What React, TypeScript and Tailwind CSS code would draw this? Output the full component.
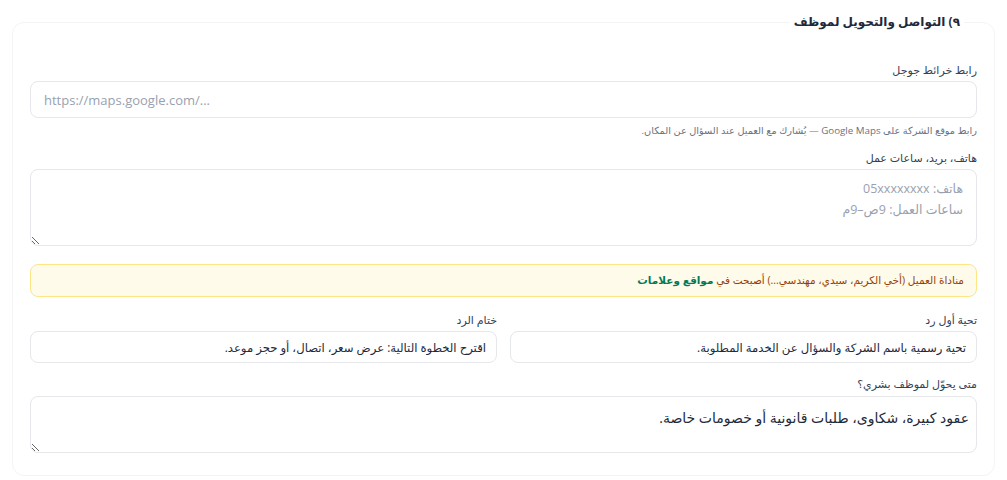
import React from 'react';

const font = { fontFamily: '"Open Sans", "DejaVu Sans", sans-serif' };

const Label: React.FC<{ children: React.ReactNode; className?: string }> = ({ children, className = '' }) => (
  <label className={`block text-[11px] leading-5 text-gray-700 ${className}`}>{children}</label>
);

const App: React.FC = () => {
  return (
    <div dir="rtl" className="min-h-screen bg-white px-[12px] pt-[12px]" style={font}>
      <fieldset className="border border-gray-100 rounded-xl px-[17px] pb-[22px]">
        <legend className="mr-[13px] px-1 text-[12px] leading-5 font-bold text-gray-800">
          ٩) التواصل والتحويل لموظف
        </legend>

        {/* Google maps */}
        <Label className="mt-[28px] mb-px">رابط خرائط جوجل</Label>
        <input
          type="text"
          dir="ltr"
          placeholder="https://maps.google.com/..."
          className="block w-full h-[37px] rounded-lg border border-gray-200 px-[13px] text-[13px] text-gray-800 placeholder:text-gray-400 focus:outline-none"
        />
        <p className="mt-[5px] text-[9.75px] leading-4 text-gray-500">
          رابط موقع الشركة على Google Maps — يُشارك مع العميل عند السؤال عن المكان.
        </p>

        {/* Contact info */}
        <Label className="mt-[9px] mb-px">هاتف، بريد، ساعات عمل</Label>
        <textarea
          placeholder={'هاتف: 05xxxxxxxx\nساعات العمل: 9ص–9م'}
          className="block w-full h-[77px] rounded-lg border border-gray-200 px-[13px] py-[8px] text-[12.5px] leading-[21px] text-gray-800 placeholder:text-gray-400 focus:outline-none"
        />

        {/* Notice */}
        <div className="mt-[18px] h-[33px] flex items-center rounded-lg border border-amber-200 bg-amber-50 px-[12px] text-[10.5px] text-amber-800">
          <span>
            مناداة العميل (أخي الكريم، سيدي، مهندسي...) أصبحت في{' '}
            <span className="font-bold text-emerald-700">مواقع وعلامات</span>
          </span>
        </div>

        {/* Greeting / closing */}
        <div className="mt-[13px] grid grid-cols-2 gap-[13px]">
          <div>
            <Label className="mb-px">تحية أول رد</Label>
            <input
              type="text"
              defaultValue="تحية رسمية باسم الشركة والسؤال عن الخدمة المطلوبة."
              className="block w-full h-[32px] rounded-lg border border-gray-200 px-[10px] text-[11.7px] text-gray-800 focus:outline-none"
            />
          </div>
          <div>
            <Label className="mb-px">ختام الرد</Label>
            <input
              type="text"
              defaultValue="اقترح الخطوة التالية: عرض سعر، اتصال، أو حجز موعد."
              className="block w-full h-[32px] rounded-lg border border-gray-200 px-[10px] text-[11.7px] text-gray-800 focus:outline-none"
            />
          </div>
        </div>

        {/* Handoff */}
        <Label className="mt-[11px] mb-0.5">متى يحوّل لموظف بشري؟</Label>
        <textarea
          defaultValue="عقود كبيرة، شكاوى، طلبات قانونية أو خصومات خاصة."
          className="block w-full h-[57px] rounded-lg border border-gray-200 pr-[7px] pl-[10px] py-[10px] text-[14px] leading-[22px] text-gray-800 focus:outline-none"
        />
      </fieldset>
    </div>
  );
};

export default App;
